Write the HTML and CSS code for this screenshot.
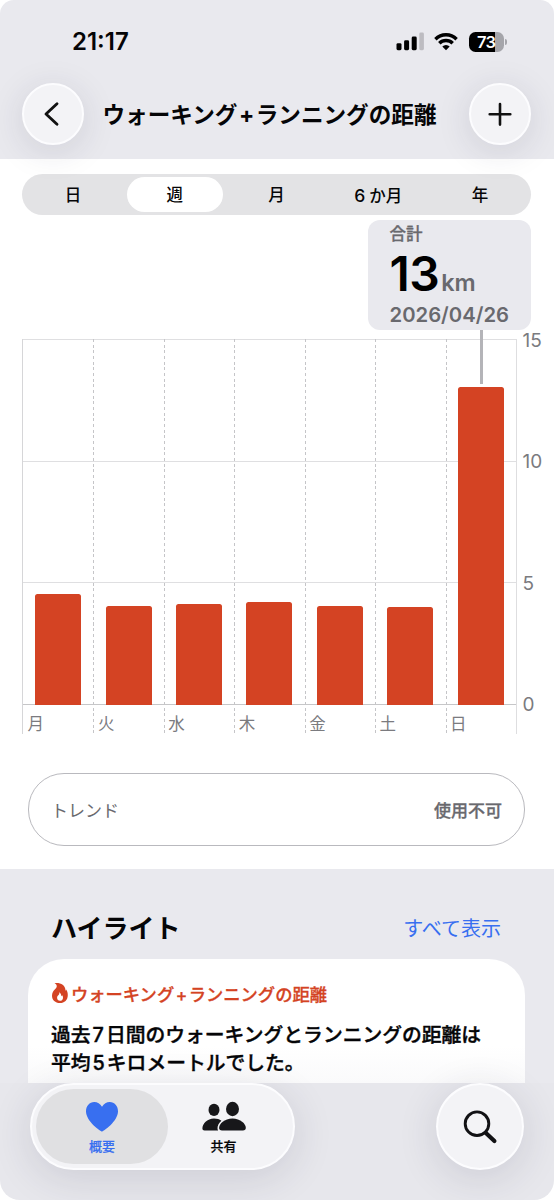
FILE: index.html
```
<!DOCTYPE html>
<html lang="ja">
<head>
  <meta charset="utf-8">
  <title>ウォーキング+ランニングの距離</title>
  <meta name="viewport" content="width=device-width, initial-scale=1">
  <link rel="stylesheet" href="styles.css">
</head>
<body>
<div class="screen">
  <header class="header">
    <div class="status-bar">
      <span class="time">21:17</span>
      <div class="status-icons">
        <svg class="signal" width="28" height="19" viewBox="0 0 28 19">
          <rect x="0.5" y="11.2" width="5" height="7" rx="1.4"/>
          <rect x="8.1" y="8.3" width="5" height="9.9" rx="1.4"/>
          <rect x="15.700" y="4.5" width="5" height="13.7" rx="1.4"/>
          <rect x="23.3" y="0.5" width="4.6" height="17.7" rx="1.4" fill="#bdbcc1"/>
        </svg>
        <svg class="wifi" width="24" height="19" viewBox="0 0 24 19">
          <g fill="none" stroke="#000" stroke-width="3.4">
            <path d="M1.4 7.2a15 15 0 0 1 21.2 0"/>
            <path d="M5.3 11.3a9.5 9.5 0 0 1 13.4 0"/>
          </g>
          <path d="M12 18.2l-3.700-3.700a5.200 5.200 0 0 1 7.400 0z"/>
        </svg>
        <div class="battery"><span>73</span></div>
      </div>
    </div>
    <nav class="nav">
      <button class="round-btn">
        <svg width="62" height="62" viewBox="0 0 62 62"><path d="M35 20.8L24 31l11 10.2" fill="none" stroke="#111" stroke-width="2.9" stroke-linecap="round" stroke-linejoin="round"/></svg>
      </button>
      <h1>ウォーキング<span class="plus">+</span>ランニングの距離</h1>
      <button class="round-btn">
        <svg width="62" height="62" viewBox="0 0 62 62"><path d="M31 21v20.6M20.7 31.3h20.6" fill="none" stroke="#111" stroke-width="2.6" stroke-linecap="round"/></svg>
      </button>
    </nav>
  </header>

  <main>
    <div class="segments">
      <span>日</span>
      <span class="active">週</span>
      <span>月</span>
      <span><i>6</i>か月</span>
      <span>年</span>
    </div>

    <div class="summary">
      <div class="summary-label">合計</div>
      <div class="summary-value">13<small>km</small></div>
      <div class="summary-date">2026/04/26</div>
    </div>

    <div class="chart">
      <div class="plot">
        <div class="grid-lines"><i></i><i></i><i></i></div>
        <div class="days">
          <div class="day"><div class="track"><b style="height:110.5px"></b></div><span>月</span></div>
          <div class="day"><div class="track"><b style="height:98.5px"></b></div><span>火</span></div>
          <div class="day"><div class="track"><b style="height:100.5px"></b></div><span>水</span></div>
          <div class="day"><div class="track"><b style="height:103px"></b></div><span>木</span></div>
          <div class="day"><div class="track"><b style="height:99px"></b></div><span>金</span></div>
          <div class="day"><div class="track"><b style="height:97.5px"></b></div><span>土</span></div>
          <div class="day selected"><div class="track"><b style="height:318px"></b></div><span>日</span></div>
        </div>
      </div>
      <div class="axis"><span>15</span><span>10</span><span>5</span><span>0</span></div>
    </div>

    <div class="trend">
      <span>トレンド</span>
      <strong>使用不可</strong>
    </div>
  </main>

  <section class="highlights">
    <div class="highlights-head">
      <h2>ハイライト</h2>
      <a>すべて表示</a>
    </div>
    <article class="card">
      <div class="card-title">
        <svg width="18" height="22" viewBox="0 0 18 22">
          <path fill="#d44323" fill-rule="evenodd" d="M3.400 1.200C8.800.1 14.200 3 14.400 7.600c0 .4 0 .8-.1 1.100.4-.3.700-.8.800-1.300 1.200 1.600 1.700 3.500 1.700 5.500 0 5-3.300 8.100-7.900 8.100S1 18 1 13.700c0-3 1.300-4.900 3-6.500C5.500 5.800 6.100 4.500 5.600 3.200 5.200 2.200 4.400 1.600 3.400 1.200zM8.300 10.200c.2 1.900-.3 2.400-1 3.100-.7.700-1.200 1.400-1.200 2.500 0 1.800 1.200 3 2.900 3s3-1.200 3-3.100c0-1-.2-1.800-.7-2.500-.2.500-.5.800-.9 1-.1-1.600-.8-3.200-2.100-4z"/>
        </svg>
        <span>ウォーキング<span class="plus">+</span>ランニングの距離</span>
      </div>
      <p>過去<i>7</i>日間のウォーキングとランニングの距離は<br>平均<i>5</i>キロメートルでした。</p>
    </article>
  </section>

  <footer class="footer">
    <div class="tabs">
      <div class="tab active">
        <svg width="34" height="32" viewBox="0 0 34 32"><path fill="#386ff0" d="M17 30.600C15.700 30.600 1 20.300 1 10.300 1 5.100 4.500 1.100 9.200 1.100c3.300 0 6 1.700 7.800 4.700 1.800-3 4.500-4.700 7.800-4.700C29.500 1.100 33 5.100 33 10.300c0 10-14.700 20.300-16 20.300z"/></svg>
        <span>概要</span>
      </div>
      <div class="tab">
        <svg width="44" height="32" viewBox="0 0 44 32" fill="#17171a">
          <ellipse cx="12" cy="8.900" rx="5.500" ry="6.100"/>
          <path d="M12 17.600c3 0 5.500.8 7.400 2.100-2.500 2.100-3.900 4.900-3.900 7.500 0 .9.200 1.600.6 2.200H2.600c-1.400 0-2.200-.7-2.200-2 0-4.200 4.700-9.800 11.600-9.800z"/>
          <ellipse cx="30.500" cy="8" rx="6.500" ry="7.200"/>
          <path d="M30.500 17.400c7.900 0 13.300 5.300 13.300 9.400 0 1.700-1 2.600-2.900 2.600H20c-1.900 0-2.900-.9-2.900-2.600 0-4.100 5.400-9.400 13.400-9.400z"/>
        </svg>
        <span>共有</span>
      </div>
    </div>
    <button class="search-btn">
      <svg width="88" height="88" viewBox="0 0 88 88" fill="none" stroke="#111114"><circle cx="41" cy="40.700" r="11.800" stroke-width="2.900"/><path d="M49.900 50l8.500 8" stroke-width="4.200" stroke-linecap="round"/></svg>
    </button>
  </footer>
</div>
</body>
</html>
```
FILE: styles.css
```
* { box-sizing: border-box; }

body {
  margin: 0;
  background: #fff;
  color: #050507;
  font-family: Inter, "Noto Sans CJK JP", sans-serif;
}

h1, h2, p { margin: 0; }
i { font-style: normal; }
svg { display: block; flex: none; }

button {
  padding: 0;
  border: 2px solid #fcfcfe;
  border-radius: 50%;
  background: #f3f3f6;
}

.screen {
  width: 554px;
  height: 1200px;
  overflow: hidden;
  border-radius: 14px 14px 20px 20px;
  background: #fff;
}

/* header */
.header {
  height: 159px;
  background: #e9e9ee;
}

.status-bar {
  display: flex;
  justify-content: space-between;
  align-items: center;
  height: 83px;
  padding: 0 50px 0 72px;
}

.time {
  font-size: 24px;
  font-weight: 600;
}

.status-icons { display: flex; align-items: center; }
.wifi { margin: 0 11px 0 10px; }

.battery {
  display: flex;
  align-items: center;
  position: relative;
  width: 35px;
  height: 20px;
  border-radius: 6.5px;
  background: linear-gradient(90deg, #000 26px, #a5a5aa 26px);
  color: #fff;
  font-size: 16.5px;
  font-weight: 600;
  letter-spacing: -0.8px;
}

.battery span { padding-left: 8px; }

.battery::after {
  content: "";
  position: absolute;
  right: -3px;
  top: 7px;
  width: 2px;
  height: 6px;
  border-radius: 0 2px 2px 0;
  background: #a5a5aa;
}

.nav {
  display: flex;
  align-items: center;
  padding: 0 23px 0 22px;
}

.nav h1 {
  flex: 1;
  padding: 2px 0 0 18.5px;
  font-size: 22.6px;
  font-weight: 700;
  line-height: 30px;
  white-space: nowrap;
}

.plus { padding: 0 1.5px; }

.round-btn {
  width: 62px;
  height: 62px;
  box-shadow: 0 6px 34px rgba(40, 40, 70, 0.13);
}

.round-btn svg { margin: -2px; }

/* period switch */
main {
  height: 710px;
  padding-top: 15px;
}

.segments {
  display: flex;
  width: 509px;
  height: 41px;
  margin-left: 22px;
  padding: 3px 0;
  border-radius: 21px;
  background: #e3e3e5;
}

.segments span {
  flex: 1;
  margin: 0 3px;
  border-radius: 18px;
  text-align: center;
  font-size: 16.5px;
  font-weight: 500;
  line-height: 37px;
}

.segments i { padding-right: 4px; font-size: 17.5px; }
.segments .active { background: #fff; }

/* selected value */
.summary {
  width: 163px;
  height: 110px;
  margin: 5px 0 0 368px;
  padding: 2px 0 0 21.5px;
  border-radius: 12px;
  background: #e9e9ee;
  color: #69696e;
  font-weight: 600;
  white-space: nowrap;
}

.summary-label {
  font-size: 16.5px;
  font-weight: 500;
  line-height: 24px;
  -webkit-text-stroke: 0.3px;
}

.summary-value {
  height: 54px;
  color: #000;
  font-size: 48px;
  line-height: 56px;
  letter-spacing: -0.6px;
}

.summary-value small { color: #69696e; font-size: 23.5px; letter-spacing: 0; margin-left: 2px; }
.summary-date { font-size: 20.3px; line-height: 30px; }

/* chart */
.chart {
  display: flex;
  height: 395px;
  margin: 9px 0 0 22px;
}

.plot {
  display: grid;
  width: 495px;
}

.grid-lines, .days { grid-area: 1 / 1; }

.grid-lines {
  display: grid;
  grid-template-rows: repeat(3, 1fr);
  height: 366px;
  border-bottom: 1px solid #c6c6c8;
}

.grid-lines i { border-top: 1px solid #dfdfe1; }

.days {
  display: flex;
  border-left: 1px solid #d6d6d8;
  border-right: 1px solid #dedee0;
}

.day {
  flex: 1;
  background: repeating-linear-gradient(#c5c5c8 0 3px, transparent 3px 5.67px) 0 0 / 1px 100% no-repeat;
}

.day:first-child { background: none; }

.track {
  display: flex;
  position: relative;
  align-items: flex-end;
  justify-content: center;
  height: 365.5px;
}

.track b {
  width: 46px;
  border-radius: 2.5px 2.5px 0 0;
  background: #d44323;
}

/* marker between the value box and the selected bar */
.selected .track::before {
  content: "";
  position: absolute;
  top: -9px;
  left: 34px;
  width: 3px;
  height: 54px;
  background: #b4b4b8;
}

.day span {
  display: block;
  height: 29px;
  padding-left: 4.5px;
  color: #7b7b7f;
  font-size: 16.5px;
  line-height: 38px;
}

.axis {
  display: flex;
  flex-direction: column;
  justify-content: space-between;
  height: 385px;
  margin: -8.5px 0 0 5.5px;
  color: #7b7b7f;
  font-size: 19px;
  line-height: 20px;
}

.trend {
  display: flex;
  justify-content: space-between;
  align-items: center;
  width: 497px;
  height: 73px;
  margin: 39px 0 0 28px;
  padding: 0 22px;
  border: 1.5px solid #b9b9be;
  border-radius: 36px;
  color: #69696e;
  font-size: 17px;
}

.trend strong { font-weight: 500; -webkit-text-stroke: 0.3px; }

/* highlights */
.highlights {
  height: 214px;
  padding: 0 29px 0 28px;
  background: #e9e9ee;
}

.highlights-head {
  display: flex;
  justify-content: space-between;
  align-items: center;
  height: 90px;
  padding: 29px 24px 0 23px;
}

.highlights-head h2 { font-size: 26px; line-height: 38px; }
.highlights-head a { color: #386ff0; font-size: 20px; line-height: 30px; }

.card {
  height: 124px;
  padding: 21px 23px 0;
  border-radius: 36px 36px 0 0;
  background: linear-gradient(#fff 70%, #fafafb);
}

.card-title {
  display: flex;
  align-items: center;
  gap: 2px;
  height: 26px;
  color: #d44323;
  font-size: 17.3px;
  font-weight: 500;
  -webkit-text-stroke: 0.3px;
}

.card p {
  margin-top: 15px;
  font-size: 19.8px;
  font-weight: 500;
  line-height: 28px;
  white-space: nowrap;
  -webkit-text-stroke: 0.4px;
}

.card i { padding: 0 2px; }

/* bottom bar */
.footer {
  display: flex;
  justify-content: space-between;
  height: 117px;
  padding: 0 30px;
  background: #e7e7ec;
}

.tabs {
  display: flex;
  width: 265px;
  height: 87px;
  padding: 4px;
  border: 2px solid #fcfcfe;
  border-radius: 44px;
  background: #f3f3f6;
  box-shadow: 0 8px 40px rgba(40, 40, 70, 0.14);
}

.tab {
  display: flex;
  flex-direction: column;
  align-items: center;
  width: 132px;
  padding-top: 12px;
  border-radius: 39px;
  font-size: 13px;
  font-weight: 500;
  line-height: 20px;
  -webkit-text-stroke: 0.2px;
}

.tab + .tab { width: 111px; }
.tab span { margin-top: 3px; }
.tab.active { background: #e0e0e2; color: #386ff0; }

.search-btn {
  width: 88px;
  height: 87px;
  box-shadow: 0 8px 40px rgba(40, 40, 70, 0.14);
}

.search-btn svg { margin: -2px; }
```
